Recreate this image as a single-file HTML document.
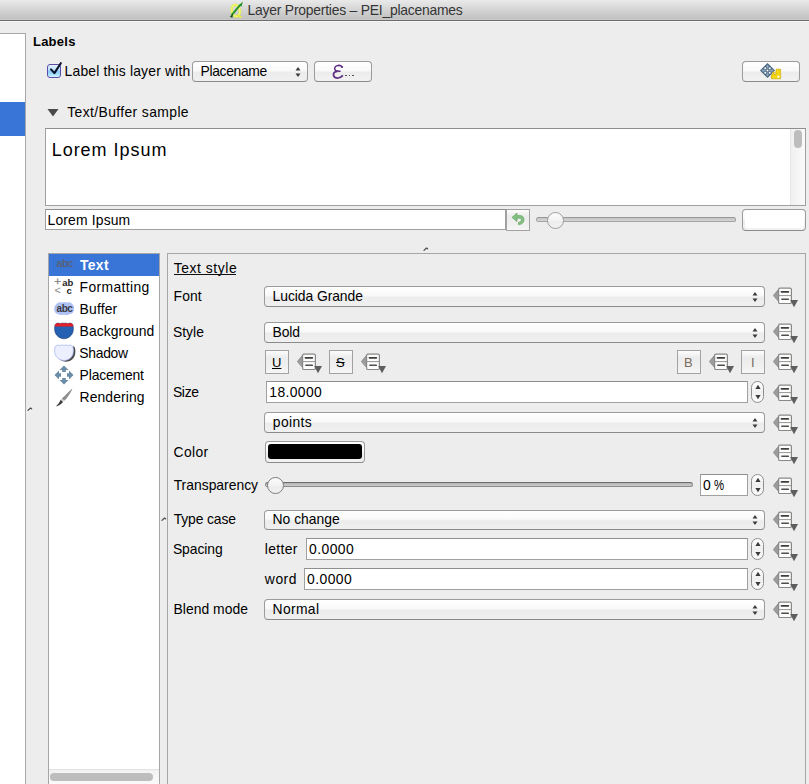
<!DOCTYPE html>
<html><head><meta charset="utf-8"><style>
html,body{margin:0;padding:0;}
body{width:809px;height:784px;overflow:hidden;position:relative;background:#ededed;font-family:"Liberation Sans", sans-serif;}
.abs{position:absolute;}
.dd{position:absolute;}
.t{position:absolute;white-space:pre;line-height:1;font-family:"Liberation Sans", sans-serif;}
.combo{position:absolute;box-sizing:border-box;border:1px solid #9b9b9b;border-bottom-color:#8a8a8a;border-radius:4px;background:linear-gradient(#ffffff,#f9f9f9 45%,#ececec 55%,#f0f0f0);}
.btn{position:absolute;box-sizing:border-box;border:1px solid #9b9b9b;border-bottom-color:#8a8a8a;border-radius:4px;background:linear-gradient(#ffffff,#f9f9f9 45%,#ececec 55%,#f2f2f2);}
.field{position:absolute;box-sizing:border-box;border:1px solid #a0a0a0;border-top-color:#8e8e8e;background:#fff;}
.sqbtn{position:absolute;box-sizing:border-box;border:1px solid #a2a2a2;background:linear-gradient(#fdfdfd,#ececec 30%,#f0f0f0 70%,#f6f6f6);}
.stepper{position:absolute;box-sizing:border-box;border:1px solid #8e8e8e;border-radius:6.5px;background:linear-gradient(#fff,#f0f0f0 50%,#fafafa);}
</style></head><body>
<div class="abs" style="left:0;top:0;width:809px;height:20px;background:linear-gradient(#eaeaea,#d6d6d6 45%,#c2c2c2 92%,#cdcdcd);border-bottom:1px solid #6c6c6c"></div>
<div class="abs" style="left:0;top:21px;width:809px;height:1px;background:#f5f5f5"></div>
<svg class="abs" style="left:229px;top:1px" width="15" height="18" viewBox="0 0 15 18"><ellipse cx="6.8" cy="9.6" rx="4" ry="5.8" transform="rotate(-12 6.8 9.6)" fill="none" stroke="#dfe84a" stroke-width="2.6"/><ellipse cx="6.8" cy="9.6" rx="4" ry="5.8" transform="rotate(-12 6.8 9.6)" fill="none" stroke="#f4f87a" stroke-width="1.2"/><path d="M8.5 13.5 Q10 16.8 12.6 15.8" fill="none" stroke="#e2ea4c" stroke-width="2"/><path d="M2.6 14.2 L11 4.2" stroke="#259325" stroke-width="1.9"/><path d="M9.6 4.4 L13.8 0.6 L12.6 5.6 Z" fill="#1f8f1f"/><path d="M0.8 15.2 L4.2 13.2 L3.2 17 Z" fill="#1b4d1b"/></svg>
<div class="t" style="left:247.62px;top:4.00px;font-size:13.9px;font-weight:400;color:#353535;letter-spacing:-0.226px;">Layer Properties – PEI_placenames</div>
<div class="abs" style="left:-1px;top:33px;width:25px;height:760px;background:#fff;border:1px solid #a8a8a8"></div>
<div class="abs" style="left:0;top:102px;width:25px;height:34px;background:#3875d7"></div>
<div class="t" style="left:32.94px;top:34.90px;font-size:13px;font-weight:700;color:#000;letter-spacing:0.256px;">Labels</div>
<div class="abs" style="left:47px;top:64px;width:12px;height:12px;border:1px solid #5e4aa8;border-radius:3px;background:linear-gradient(#e4f2ff,#bfe0ff 40%,#8ccaff 55%,#b0e4ff 85%,#d4fbff)"></div>
<svg class="abs" style="left:48px;top:60px" width="15" height="16" viewBox="0 0 15 16"><path d="M3 9.4 L6.4 13.1 L12.8 3.2" fill="none" stroke="#0c1428" stroke-width="2.1" stroke-linecap="round" stroke-linejoin="round"/></svg>
<div class="t" style="left:64.62px;top:65.00px;font-size:13.9px;font-weight:400;color:#000;letter-spacing:0.183px;">Label this layer with</div>
<div class="combo" style="left:192px;top:61px;width:116px;height:21px;"></div><svg class="abs" style="left:294px;top:65.5px" width="8" height="12" viewBox="0 0 8 12"><path d="M1.5 4.5 L4 1 L6.5 4.5 Z" fill="#3a3a3a"/><path d="M1.5 7.5 L4 11 L6.5 7.5 Z" fill="#3a3a3a"/></svg><div class="t" style="left:200.62px;top:65.00px;font-size:13.9px;font-weight:400;color:#000;letter-spacing:-0.354px;">Placename</div>
<div class="btn" style="left:314px;top:61px;width:58px;height:21px;"></div>
<svg class="abs" style="left:332px;top:63.5px" width="13" height="15" viewBox="0 0 13 15"><path d="M10.2 3 C9 1.4 6.6 1.1 4.6 1.9 C2.6 2.7 2.1 5 3.5 6.4 C4.4 7.2 6.2 7.4 8.6 7.3" fill="none" stroke="#5d2c82" stroke-width="1.5"/><path d="M5.4 7.4 C2.8 7.7 1.3 9.4 1.5 11.2 C1.7 13.2 3.9 14.2 6 14 C8.1 13.8 9.6 12.8 10.9 11.4" fill="none" stroke="#5d2c82" stroke-width="1.7"/><circle cx="10" cy="3" r="1.1" fill="#5d2c82"/></svg>
<div class="abs" style="left:345px;top:74.5px;width:1.8px;height:1.8px;background:#555"></div><div class="abs" style="left:348.5px;top:74.5px;width:1.8px;height:1.8px;background:#555"></div><div class="abs" style="left:352px;top:74.5px;width:1.8px;height:1.8px;background:#555"></div>
<div class="btn" style="left:742px;top:61px;width:58px;height:21px;"></div>
<svg class="abs" style="left:759px;top:62px" width="23" height="18" viewBox="0 0 23 18"><path d="M8.5 1 L16 8.5 L8.5 16 L1 8.5 Z" fill="#44627b"/><g fill="#8ba6bc"><path d="M8.5 2.4 L10.4 4.5 L9.2 4.5 L9.2 6.6 L7.8 6.6 L7.8 4.5 L6.6 4.5 Z"/><path d="M8.5 14.6 L10.4 12.5 L9.2 12.5 L9.2 10.4 L7.8 10.4 L7.8 12.5 L6.6 12.5 Z"/><path d="M2.4 8.5 L4.5 6.6 L4.5 7.8 L6.6 7.8 L6.6 9.2 L4.5 9.2 L4.5 10.4 Z"/><path d="M14.6 8.5 L12.5 6.6 L12.5 7.8 L10.4 7.8 L10.4 9.2 L12.5 9.2 L12.5 10.4 Z"/></g><g fill="#fff"><rect x="5.4" y="5.4" width="1.8" height="1.8"/><rect x="9.8" y="5.4" width="1.8" height="1.8"/><rect x="5.4" y="9.8" width="1.8" height="1.8"/><rect x="9.8" y="9.8" width="1.8" height="1.8"/><rect x="7.6" y="7.6" width="1.8" height="1.8"/></g><path d="M17 7.2 L21.6 7.2 L21.6 16.8 L12.4 16.8 L12.4 12.6 L13.8 12.6 L13.8 11.6 C13 11 13.4 9.8 14.4 9.8 C15.4 9.8 15.8 11 15.2 11.6 L15.2 12.6 L17 12.6 L17 11.6 C16.2 11 16.6 9.6 17 9.4 Z" fill="#f4d60c" stroke="#c9a600" stroke-width="0.6"/><rect x="18.4" y="13.6" width="2" height="2" fill="#fff"/></svg>
<svg class="abs" style="left:47px;top:108px" width="12" height="9" viewBox="0 0 12 9"><path d="M0.5 1 L11.5 1 L6 8.5 Z" fill="#4a4a4a"/></svg>
<div class="t" style="left:67.21px;top:106.00px;font-size:13.9px;font-weight:400;color:#000;letter-spacing:0.389px;">Text/Buffer sample</div>
<div class="field" style="left:45px;top:128px;width:761px;height:78px;"></div>
<div class="abs" style="left:790px;top:129px;width:14px;height:76px;background:linear-gradient(90deg,#f0f0f0,#fafafa);border-left:1px solid #e6e6e6"></div>
<div class="abs" style="left:794px;top:130px;width:8px;height:18px;border-radius:4px;background:#bdbdbd"></div>
<div class="t" style="left:51.66px;top:140.76px;font-size:18px;font-weight:400;color:#000;letter-spacing:0.974px;">Lorem Ipsum</div>
<div class="field" style="left:45px;top:209px;width:461px;height:21px;"></div>
<div class="t" style="left:47.59px;top:214.00px;font-size:13.9px;font-weight:400;color:#000;letter-spacing:0.155px;">Lorem Ipsum</div>
<div class="sqbtn" style="left:506px;top:209px;width:24px;height:22px;"></div>
<svg class="abs" style="left:510px;top:211px" width="16" height="16" viewBox="0 0 16 16"><path d="M2 6.4 L7 2 L7 4.4 L9.6 4.4 C12.4 4.4 14 6.2 14 8.6 C14 11.4 12 13.2 9.6 13.6 L8.6 13.8 L8.4 11.4 C10.4 11.2 11.4 10.2 11.4 8.8 C11.4 7.6 10.6 7.2 9.4 7.2 L7 7.2 L7 10.6 Z" fill="#82c082" stroke="#5a9c5a" stroke-width="0.6" stroke-linejoin="round"/></svg>
<div class="abs" style="left:536px;top:217px;width:200px;height:5px;box-sizing:border-box;border-radius:2.5px;background:linear-gradient(#c4c4c4,#d6d6d6);border:1px solid #a4a4a4;border-top-color:#989898"></div>
<div class="abs" style="left:547px;top:212px;width:17px;height:17px;box-sizing:border-box;border-radius:50%;border:1px solid #a0a0a0;background:linear-gradient(#fbfbfb,#f3f3f3 50%,#ececec 51%,#f2f2f2)"></div>
<div class="btn" style="left:742px;top:209px;width:64px;height:22px;border-radius:4px"></div>
<div class="abs" style="left:745px;top:212px;width:59px;height:16px;border-radius:3px;background:#fff"></div>
<svg class="abs" style="left:422.5px;top:246.5px" width="7" height="6" viewBox="0 0 7 6"><path d="M1 3.4 L3.2 1.2 Q4 0.9 4.6 1.9" fill="none" stroke="#505050" stroke-width="1.3" stroke-linecap="round"/><path d="M3 4.6 L4.4 3.4" stroke="#fff" stroke-width="1"/></svg>
<svg class="abs" style="left:27px;top:406.5px" width="7" height="6" viewBox="0 0 7 6"><path d="M1 3.4 L3.2 1.2 Q4 0.9 4.6 1.9" fill="none" stroke="#505050" stroke-width="1.3" stroke-linecap="round"/><path d="M3 4.6 L4.4 3.4" stroke="#fff" stroke-width="1"/></svg>
<svg class="abs" style="left:161px;top:516.5px" width="7" height="6" viewBox="0 0 7 6"><path d="M1 3.4 L3.2 1.2 Q4 0.9 4.6 1.9" fill="none" stroke="#505050" stroke-width="1.3" stroke-linecap="round"/><path d="M3 4.6 L4.4 3.4" stroke="#fff" stroke-width="1"/></svg>
<div class="field" style="left:48px;top:253px;width:112px;height:547px;border-color:#a6a6a6"></div>
<div class="abs" style="left:49px;top:254px;width:110px;height:22px;background:#3875d7"></div>
<div class="t" style="left:79.91px;top:259.00px;font-size:13.9px;font-weight:700;color:#fff;letter-spacing:0.363px;">Text</div>
<div class="t" style="left:79.62px;top:281.00px;font-size:13.9px;font-weight:400;color:#000;letter-spacing:0.356px;">Formatting</div>
<div class="t" style="left:79.62px;top:303.00px;font-size:13.9px;font-weight:400;color:#000;letter-spacing:0.152px;">Buffer</div>
<div class="t" style="left:79.62px;top:325.00px;font-size:13.9px;font-weight:400;color:#000;letter-spacing:0.059px;">Background</div>
<div class="t" style="left:79.18px;top:347.00px;font-size:13.9px;font-weight:400;color:#000;letter-spacing:-0.247px;">Shadow</div>
<div class="t" style="left:79.62px;top:369.00px;font-size:13.9px;font-weight:400;color:#000;letter-spacing:-0.161px;">Placement</div>
<div class="t" style="left:79.62px;top:391.00px;font-size:13.9px;font-weight:400;color:#000;letter-spacing:0.089px;">Rendering</div>
<div class="t" style="left:56.50px;top:258.41px;font-size:10.5px;font-weight:400;color:#5e5e66;letter-spacing:-0.200px;-webkit-text-stroke:0.2px #5e5e66;">abc</div>
<div class="t" style="left:54.20px;top:276.27px;font-size:11.5px;font-weight:400;color:#8a8a8a;letter-spacing:0.000px;-webkit-text-stroke:0.3px #8a8a8a;">+</div>
<div class="t" style="left:62.30px;top:277.56px;font-size:9.5px;font-weight:700;color:#262626;letter-spacing:-0.200px;">ab</div>
<div class="t" style="left:54.50px;top:284.69px;font-size:11px;font-weight:400;color:#8a8a8a;letter-spacing:0.000px;"><</div>
<div class="t" style="left:66.50px;top:285.56px;font-size:9.5px;font-weight:700;color:#262626;letter-spacing:0.000px;">c</div>
<svg class="abs" style="left:53px;top:301px" width="22" height="15" viewBox="0 0 22 15"><path d="M4 2.5 Q6 0.6 9 1.6 Q11.5 0.2 14 1.6 Q17 0.8 19 2.8 Q21.6 5 21 8.5 Q20.6 12.5 17 13 Q14 14.6 11 13.4 Q8 14.6 5 13.2 Q1.4 12.4 1.2 8.5 Q1 4.5 4 2.5 Z" fill="#aec0f4"/></svg>
<div class="t" style="left:56.50px;top:303.83px;font-size:10px;font-weight:700;color:#3a3a44;letter-spacing:-0.400px;">abc</div>
<svg class="abs" style="left:54px;top:322px" width="20" height="18" viewBox="0 0 20 18"><path d="M1.3 2.3 Q3.6 0 6.3 1.7 Q8.2 0.4 10 1.4 Q11.8 0.4 13.7 1.7 Q16.4 0 18.7 2.3 C19.6 4.5 19.6 8 18.8 10.5 C17.6 14 14 16.6 10 16.8 C6 16.6 2.4 14 1.2 10.5 C0.4 8 0.4 4.5 1.3 2.3 Z" fill="#2561b3" stroke="#1d3c72" stroke-width="0.6"/><path d="M1.3 2.3 Q3.6 0 6.3 1.7 Q8.2 0.4 10 1.4 Q11.8 0.4 13.7 1.7 Q16.4 0 18.7 2.3 C19 3 19.1 3.8 19.2 4.6 L0.8 4.6 C0.9 3.8 1 3 1.3 2.3 Z" fill="#e2202a"/></svg>
<svg class="abs" style="left:54px;top:344px" width="22" height="20" viewBox="0 0 22 20"><path d="M3 3.3 Q5.3 1 8 2.7 Q10 1.4 11.8 2.4 Q13.8 1.4 15.7 2.7 Q18.4 1 20.7 3.3 C21.6 5.5 21.6 9 20.8 11.5 C19.6 15 16 17.6 12 17.8 C8 17.6 4.4 15 3.2 11.5 C2.4 9 2.4 5.5 3 3.3 Z" fill="#4a4a4a"/><path d="M1.3 2.3 Q3.6 0 6.3 1.7 Q8.2 0.4 10 1.4 Q11.8 0.4 13.7 1.7 Q16.4 0 18.7 2.3 C19.6 4.5 19.6 8 18.8 10.5 C17.6 14 14 16.3 10 16.5 C6 16.3 2.4 14 1.2 10.5 C0.4 8 0.4 4.5 1.3 2.3 Z" fill="#eceffd" stroke="#a9b9f2" stroke-width="0.8"/></svg>
<svg class="abs" style="left:54px;top:365px" width="20" height="20" viewBox="0 0 20 20"><g fill="#6c8ca6"><path d="M10 0.5 L14.5 5 L11.8 5 L11.8 7 L8.2 7 L8.2 5 L5.5 5 Z"/><path d="M10 19.5 L14.5 15 L11.8 15 L11.8 13 L8.2 13 L8.2 15 L5.5 15 Z"/><path d="M0.5 10 L5 5.5 L5 8.2 L7 8.2 L7 11.8 L5 11.8 L5 14.5 Z"/><path d="M19.5 10 L15 5.5 L15 8.2 L13 8.2 L13 11.8 L15 11.8 L15 14.5 Z"/></g></svg>
<svg class="abs" style="left:55px;top:388px" width="18" height="19" viewBox="0 0 18 19"><path d="M17.4 0.6 C16.6 3.4 14.2 7 11.6 10.4 L9.2 12.8 L6.8 10.6 L9 8.4 C11.8 5.6 14.6 2.8 17.4 0.6 Z" fill="#8e8e8e"/><path d="M17.4 0.6 C14.8 3.2 12 6 9.2 8.8 L8.2 9.8 C11.2 6.6 14.2 3.6 17.4 0.6 Z" fill="#d0d0d0"/><path d="M9.2 12.8 L6.8 10.6 L5.6 11.8 L8 14 Z" fill="#cfcfcf"/><path d="M0.8 18.4 C4 17.8 6.4 16 8 14 L5.6 11.8 C4.8 14 3.2 16.4 0.8 18.4 Z" fill="#3c3c3c"/></svg>
<div class="abs" style="left:49px;top:769px;width:110px;height:16px;background:linear-gradient(#f2f2f2,#fafafa);border-top:1px solid #e2e2e2"></div>
<div class="abs" style="left:50px;top:773px;width:103px;height:8px;border-radius:4px;background:#bdbdbd"></div>
<div class="abs" style="left:167px;top:253px;width:637px;height:560px;border:1px solid #a6a6a6;background:#ededed"></div>
<div class="t" style="left:173.63px;top:262.00px;font-size:13.9px;font-weight:400;color:#000;letter-spacing:0.576px;">Text style</div>
<div class="abs" style="left:174px;top:274px;width:62px;height:1px;background:#111"></div>
<div class="t" style="left:173.52px;top:290.00px;font-size:13.9px;font-weight:400;color:#000;letter-spacing:0.125px;">Font</div>
<div class="t" style="left:172.88px;top:326.00px;font-size:13.9px;font-weight:400;color:#000;letter-spacing:0.047px;">Style</div>
<div class="t" style="left:172.88px;top:386.00px;font-size:13.9px;font-weight:400;color:#000;letter-spacing:-0.280px;">Size</div>
<div class="t" style="left:173.59px;top:446.00px;font-size:13.9px;font-weight:400;color:#000;letter-spacing:0.359px;">Color</div>
<div class="t" style="left:173.63px;top:479.00px;font-size:13.9px;font-weight:400;color:#000;letter-spacing:0.003px;">Transparency</div>
<div class="t" style="left:173.63px;top:513.00px;font-size:13.9px;font-weight:400;color:#000;letter-spacing:-0.127px;">Type case</div>
<div class="t" style="left:172.88px;top:543.00px;font-size:13.9px;font-weight:400;color:#000;letter-spacing:-0.057px;">Spacing</div>
<div class="t" style="left:173.52px;top:603.00px;font-size:13.9px;font-weight:400;color:#000;letter-spacing:0.024px;">Blend mode</div>
<div class="combo" style="left:264px;top:286px;width:501px;height:21px;"></div><svg class="abs" style="left:751px;top:290.5px" width="8" height="12" viewBox="0 0 8 12"><path d="M1.5 4.5 L4 1 L6.5 4.5 Z" fill="#3a3a3a"/><path d="M1.5 7.5 L4 11 L6.5 7.5 Z" fill="#3a3a3a"/></svg><div class="t" style="left:272.62px;top:290.00px;font-size:13.9px;font-weight:400;color:#000;letter-spacing:-0.070px;">Lucida Grande</div>
<svg class="dd" style="left:773px;top:287px" width="26" height="21" viewBox="0 0 26 21"><path d="M0.3 8.5 L5.5 2.3 L5.5 14.5 Z" fill="#9c9c9c" stroke="#777" stroke-width="0.6" stroke-linejoin="round"/><rect x="5.6" y="1.1" width="12.8" height="15.4" rx="1.3" fill="#fdfdfd" stroke="#888886" stroke-width="1.2"/><line x1="5.6" y1="8.6" x2="18.4" y2="8.6" stroke="#959593" stroke-width="1"/><rect x="7.6" y="4" width="8.6" height="1.7" rx="0.8" fill="#3e3e3c"/><rect x="8.1" y="11.6" width="8" height="1.3" rx="0.6" fill="#4e4e4c"/><path d="M17.2 12.9 L25 12.9 L21 20.2 Z" fill="#5e5e5e"/></svg>
<div class="combo" style="left:264px;top:322px;width:501px;height:21px;"></div><svg class="abs" style="left:751px;top:326.5px" width="8" height="12" viewBox="0 0 8 12"><path d="M1.5 4.5 L4 1 L6.5 4.5 Z" fill="#3a3a3a"/><path d="M1.5 7.5 L4 11 L6.5 7.5 Z" fill="#3a3a3a"/></svg><div class="t" style="left:272.62px;top:326.00px;font-size:13.9px;font-weight:400;color:#000;letter-spacing:-0.177px;">Bold</div>
<svg class="dd" style="left:773px;top:323px" width="26" height="21" viewBox="0 0 26 21"><path d="M0.3 8.5 L5.5 2.3 L5.5 14.5 Z" fill="#9c9c9c" stroke="#777" stroke-width="0.6" stroke-linejoin="round"/><rect x="5.6" y="1.1" width="12.8" height="15.4" rx="1.3" fill="#fdfdfd" stroke="#888886" stroke-width="1.2"/><line x1="5.6" y1="8.6" x2="18.4" y2="8.6" stroke="#959593" stroke-width="1"/><rect x="7.6" y="4" width="8.6" height="1.7" rx="0.8" fill="#3e3e3c"/><rect x="8.1" y="11.6" width="8" height="1.3" rx="0.6" fill="#4e4e4c"/><path d="M17.2 12.9 L25 12.9 L21 20.2 Z" fill="#5e5e5e"/></svg>
<div class="sqbtn" style="left:265px;top:350px;width:24px;height:24px;"></div>
<div class="sqbtn" style="left:329px;top:350px;width:24px;height:24px;"></div>
<div class="sqbtn" style="left:677px;top:350px;width:24px;height:24px;"></div>
<div class="sqbtn" style="left:741px;top:350px;width:24px;height:24px;"></div>
<div class="t" style="left:272px;top:356px;font-size:13px;text-decoration:underline">U</div>
<div class="t" style="left:336px;top:356px;font-size:13px;text-decoration:line-through">S</div>
<div class="t" style="left:684px;top:356px;font-size:13px;color:#7a6a5a">B</div>
<div class="t" style="left:751px;top:356px;font-size:13px;color:#7a6a5a">I</div>
<svg class="dd" style="left:297px;top:353px" width="26" height="21" viewBox="0 0 26 21"><path d="M0.3 8.5 L5.5 2.3 L5.5 14.5 Z" fill="#9c9c9c" stroke="#777" stroke-width="0.6" stroke-linejoin="round"/><rect x="5.6" y="1.1" width="12.8" height="15.4" rx="1.3" fill="#fdfdfd" stroke="#888886" stroke-width="1.2"/><line x1="5.6" y1="8.6" x2="18.4" y2="8.6" stroke="#959593" stroke-width="1"/><rect x="7.6" y="4" width="8.6" height="1.7" rx="0.8" fill="#3e3e3c"/><rect x="8.1" y="11.6" width="8" height="1.3" rx="0.6" fill="#4e4e4c"/><path d="M17.2 12.9 L25 12.9 L21 20.2 Z" fill="#5e5e5e"/></svg>
<svg class="dd" style="left:361px;top:353px" width="26" height="21" viewBox="0 0 26 21"><path d="M0.3 8.5 L5.5 2.3 L5.5 14.5 Z" fill="#9c9c9c" stroke="#777" stroke-width="0.6" stroke-linejoin="round"/><rect x="5.6" y="1.1" width="12.8" height="15.4" rx="1.3" fill="#fdfdfd" stroke="#888886" stroke-width="1.2"/><line x1="5.6" y1="8.6" x2="18.4" y2="8.6" stroke="#959593" stroke-width="1"/><rect x="7.6" y="4" width="8.6" height="1.7" rx="0.8" fill="#3e3e3c"/><rect x="8.1" y="11.6" width="8" height="1.3" rx="0.6" fill="#4e4e4c"/><path d="M17.2 12.9 L25 12.9 L21 20.2 Z" fill="#5e5e5e"/></svg>
<svg class="dd" style="left:709px;top:353px" width="26" height="21" viewBox="0 0 26 21"><path d="M0.3 8.5 L5.5 2.3 L5.5 14.5 Z" fill="#9c9c9c" stroke="#777" stroke-width="0.6" stroke-linejoin="round"/><rect x="5.6" y="1.1" width="12.8" height="15.4" rx="1.3" fill="#fdfdfd" stroke="#888886" stroke-width="1.2"/><line x1="5.6" y1="8.6" x2="18.4" y2="8.6" stroke="#959593" stroke-width="1"/><rect x="7.6" y="4" width="8.6" height="1.7" rx="0.8" fill="#3e3e3c"/><rect x="8.1" y="11.6" width="8" height="1.3" rx="0.6" fill="#4e4e4c"/><path d="M17.2 12.9 L25 12.9 L21 20.2 Z" fill="#5e5e5e"/></svg>
<svg class="dd" style="left:773px;top:353px" width="26" height="21" viewBox="0 0 26 21"><path d="M0.3 8.5 L5.5 2.3 L5.5 14.5 Z" fill="#9c9c9c" stroke="#777" stroke-width="0.6" stroke-linejoin="round"/><rect x="5.6" y="1.1" width="12.8" height="15.4" rx="1.3" fill="#fdfdfd" stroke="#888886" stroke-width="1.2"/><line x1="5.6" y1="8.6" x2="18.4" y2="8.6" stroke="#959593" stroke-width="1"/><rect x="7.6" y="4" width="8.6" height="1.7" rx="0.8" fill="#3e3e3c"/><rect x="8.1" y="11.6" width="8" height="1.3" rx="0.6" fill="#4e4e4c"/><path d="M17.2 12.9 L25 12.9 L21 20.2 Z" fill="#5e5e5e"/></svg>
<div class="field" style="left:266px;top:381px;width:482px;height:22px;"></div>
<div class="t" style="left:269.35px;top:386.00px;font-size:13.9px;font-weight:400;color:#000;letter-spacing:0.372px;">18.0000</div>
<div class="stepper" style="left:751px;top:381px;width:13px;height:22px;"></div><svg class="abs" style="left:753.5px;top:384px" width="8" height="16" viewBox="0 0 8 16"><path d="M1.4 5 L4 0.8 L6.6 5 Z" fill="#3a3a3a"/><path d="M1.4 11 L4 15.2 L6.6 11 Z" fill="#3a3a3a"/></svg>
<svg class="dd" style="left:773px;top:384px" width="26" height="21" viewBox="0 0 26 21"><path d="M0.3 8.5 L5.5 2.3 L5.5 14.5 Z" fill="#9c9c9c" stroke="#777" stroke-width="0.6" stroke-linejoin="round"/><rect x="5.6" y="1.1" width="12.8" height="15.4" rx="1.3" fill="#fdfdfd" stroke="#888886" stroke-width="1.2"/><line x1="5.6" y1="8.6" x2="18.4" y2="8.6" stroke="#959593" stroke-width="1"/><rect x="7.6" y="4" width="8.6" height="1.7" rx="0.8" fill="#3e3e3c"/><rect x="8.1" y="11.6" width="8" height="1.3" rx="0.6" fill="#4e4e4c"/><path d="M17.2 12.9 L25 12.9 L21 20.2 Z" fill="#5e5e5e"/></svg>
<div class="combo" style="left:264px;top:412px;width:501px;height:21px;"></div><svg class="abs" style="left:751px;top:416.5px" width="8" height="12" viewBox="0 0 8 12"><path d="M1.5 4.5 L4 1 L6.5 4.5 Z" fill="#3a3a3a"/><path d="M1.5 7.5 L4 11 L6.5 7.5 Z" fill="#3a3a3a"/></svg><div class="t" style="left:272.78px;top:416.00px;font-size:13.9px;font-weight:400;color:#000;letter-spacing:0.388px;">points</div>
<svg class="dd" style="left:773px;top:414px" width="26" height="21" viewBox="0 0 26 21"><path d="M0.3 8.5 L5.5 2.3 L5.5 14.5 Z" fill="#9c9c9c" stroke="#777" stroke-width="0.6" stroke-linejoin="round"/><rect x="5.6" y="1.1" width="12.8" height="15.4" rx="1.3" fill="#fdfdfd" stroke="#888886" stroke-width="1.2"/><line x1="5.6" y1="8.6" x2="18.4" y2="8.6" stroke="#959593" stroke-width="1"/><rect x="7.6" y="4" width="8.6" height="1.7" rx="0.8" fill="#3e3e3c"/><rect x="8.1" y="11.6" width="8" height="1.3" rx="0.6" fill="#4e4e4c"/><path d="M17.2 12.9 L25 12.9 L21 20.2 Z" fill="#5e5e5e"/></svg>
<div class="btn" style="left:265px;top:441px;width:100px;height:22px;border-radius:4px"></div>
<div class="abs" style="left:268px;top:444px;width:94px;height:15px;border-radius:3px;background:#000"></div>
<svg class="dd" style="left:773px;top:444px" width="26" height="21" viewBox="0 0 26 21"><path d="M0.3 8.5 L5.5 2.3 L5.5 14.5 Z" fill="#9c9c9c" stroke="#777" stroke-width="0.6" stroke-linejoin="round"/><rect x="5.6" y="1.1" width="12.8" height="15.4" rx="1.3" fill="#fdfdfd" stroke="#888886" stroke-width="1.2"/><line x1="5.6" y1="8.6" x2="18.4" y2="8.6" stroke="#959593" stroke-width="1"/><rect x="7.6" y="4" width="8.6" height="1.7" rx="0.8" fill="#3e3e3c"/><rect x="8.1" y="11.6" width="8" height="1.3" rx="0.6" fill="#4e4e4c"/><path d="M17.2 12.9 L25 12.9 L21 20.2 Z" fill="#5e5e5e"/></svg>
<div class="abs" style="left:265px;top:482px;width:428px;height:5px;box-sizing:border-box;border-radius:2.5px;background:linear-gradient(#b4b4b4,#cdcdcd);border:1px solid #8c8c8c;border-top-color:#6e6e6e"></div>
<div class="abs" style="left:267px;top:477px;width:17px;height:17px;box-sizing:border-box;border-radius:50%;border:1px solid #7e7e7e;background:linear-gradient(#fbfbfb,#f3f3f3 50%,#ececec 51%,#f2f2f2)"></div>
<div class="field" style="left:700px;top:474px;width:48px;height:22px;"></div>
<div class="t" style="left:702.94px;top:479.00px;font-size:13.9px;font-weight:400;color:#000;letter-spacing:0.000px;">0</div>
<div class="t" style="left:714.33px;top:479.00px;font-size:13.9px;font-weight:400;color:#000;letter-spacing:0.000px;transform:scaleX(0.82);transform-origin:0 0;">%</div>
<div class="stepper" style="left:751px;top:474px;width:13px;height:22px;"></div><svg class="abs" style="left:753.5px;top:477px" width="8" height="16" viewBox="0 0 8 16"><path d="M1.4 5 L4 0.8 L6.6 5 Z" fill="#3a3a3a"/><path d="M1.4 11 L4 15.2 L6.6 11 Z" fill="#3a3a3a"/></svg>
<svg class="dd" style="left:773px;top:477px" width="26" height="21" viewBox="0 0 26 21"><path d="M0.3 8.5 L5.5 2.3 L5.5 14.5 Z" fill="#9c9c9c" stroke="#777" stroke-width="0.6" stroke-linejoin="round"/><rect x="5.6" y="1.1" width="12.8" height="15.4" rx="1.3" fill="#fdfdfd" stroke="#888886" stroke-width="1.2"/><line x1="5.6" y1="8.6" x2="18.4" y2="8.6" stroke="#959593" stroke-width="1"/><rect x="7.6" y="4" width="8.6" height="1.7" rx="0.8" fill="#3e3e3c"/><rect x="8.1" y="11.6" width="8" height="1.3" rx="0.6" fill="#4e4e4c"/><path d="M17.2 12.9 L25 12.9 L21 20.2 Z" fill="#5e5e5e"/></svg>
<div class="combo" style="left:264px;top:510px;width:501px;height:20px;"></div><svg class="abs" style="left:751px;top:514.0px" width="8" height="12" viewBox="0 0 8 12"><path d="M1.5 4.5 L4 1 L6.5 4.5 Z" fill="#3a3a3a"/><path d="M1.5 7.5 L4 11 L6.5 7.5 Z" fill="#3a3a3a"/></svg><div class="t" style="left:272.62px;top:513.00px;font-size:13.9px;font-weight:400;color:#000;letter-spacing:-0.024px;">No change</div>
<svg class="dd" style="left:773px;top:511px" width="26" height="21" viewBox="0 0 26 21"><path d="M0.3 8.5 L5.5 2.3 L5.5 14.5 Z" fill="#9c9c9c" stroke="#777" stroke-width="0.6" stroke-linejoin="round"/><rect x="5.6" y="1.1" width="12.8" height="15.4" rx="1.3" fill="#fdfdfd" stroke="#888886" stroke-width="1.2"/><line x1="5.6" y1="8.6" x2="18.4" y2="8.6" stroke="#959593" stroke-width="1"/><rect x="7.6" y="4" width="8.6" height="1.7" rx="0.8" fill="#3e3e3c"/><rect x="8.1" y="11.6" width="8" height="1.3" rx="0.6" fill="#4e4e4c"/><path d="M17.2 12.9 L25 12.9 L21 20.2 Z" fill="#5e5e5e"/></svg>
<div class="t" style="left:264.79px;top:543.00px;font-size:13.9px;font-weight:400;color:#000;letter-spacing:0.347px;">letter</div>
<div class="field" style="left:306px;top:538px;width:442px;height:22px;"></div>
<div class="t" style="left:309.10px;top:543.00px;font-size:13.9px;font-weight:400;color:#000;letter-spacing:0.414px;">0.0000</div>
<div class="stepper" style="left:751px;top:538px;width:13px;height:22px;"></div><svg class="abs" style="left:753.5px;top:541px" width="8" height="16" viewBox="0 0 8 16"><path d="M1.4 5 L4 0.8 L6.6 5 Z" fill="#3a3a3a"/><path d="M1.4 11 L4 15.2 L6.6 11 Z" fill="#3a3a3a"/></svg>
<svg class="dd" style="left:773px;top:541px" width="26" height="21" viewBox="0 0 26 21"><path d="M0.3 8.5 L5.5 2.3 L5.5 14.5 Z" fill="#9c9c9c" stroke="#777" stroke-width="0.6" stroke-linejoin="round"/><rect x="5.6" y="1.1" width="12.8" height="15.4" rx="1.3" fill="#fdfdfd" stroke="#888886" stroke-width="1.2"/><line x1="5.6" y1="8.6" x2="18.4" y2="8.6" stroke="#959593" stroke-width="1"/><rect x="7.6" y="4" width="8.6" height="1.7" rx="0.8" fill="#3e3e3c"/><rect x="8.1" y="11.6" width="8" height="1.3" rx="0.6" fill="#4e4e4c"/><path d="M17.2 12.9 L25 12.9 L21 20.2 Z" fill="#5e5e5e"/></svg>
<div class="t" style="left:264.85px;top:573.00px;font-size:13.9px;font-weight:400;color:#000;letter-spacing:0.507px;">word</div>
<div class="field" style="left:304px;top:568px;width:444px;height:22px;"></div>
<div class="t" style="left:307.04px;top:573.00px;font-size:13.9px;font-weight:400;color:#000;letter-spacing:0.433px;">0.0000</div>
<div class="stepper" style="left:751px;top:568px;width:13px;height:22px;"></div><svg class="abs" style="left:753.5px;top:571px" width="8" height="16" viewBox="0 0 8 16"><path d="M1.4 5 L4 0.8 L6.6 5 Z" fill="#3a3a3a"/><path d="M1.4 11 L4 15.2 L6.6 11 Z" fill="#3a3a3a"/></svg>
<svg class="dd" style="left:773px;top:571px" width="26" height="21" viewBox="0 0 26 21"><path d="M0.3 8.5 L5.5 2.3 L5.5 14.5 Z" fill="#9c9c9c" stroke="#777" stroke-width="0.6" stroke-linejoin="round"/><rect x="5.6" y="1.1" width="12.8" height="15.4" rx="1.3" fill="#fdfdfd" stroke="#888886" stroke-width="1.2"/><line x1="5.6" y1="8.6" x2="18.4" y2="8.6" stroke="#959593" stroke-width="1"/><rect x="7.6" y="4" width="8.6" height="1.7" rx="0.8" fill="#3e3e3c"/><rect x="8.1" y="11.6" width="8" height="1.3" rx="0.6" fill="#4e4e4c"/><path d="M17.2 12.9 L25 12.9 L21 20.2 Z" fill="#5e5e5e"/></svg>
<div class="combo" style="left:264px;top:599px;width:501px;height:21px;"></div><svg class="abs" style="left:751px;top:603.5px" width="8" height="12" viewBox="0 0 8 12"><path d="M1.5 4.5 L4 1 L6.5 4.5 Z" fill="#3a3a3a"/><path d="M1.5 7.5 L4 11 L6.5 7.5 Z" fill="#3a3a3a"/></svg><div class="t" style="left:272.62px;top:603.00px;font-size:13.9px;font-weight:400;color:#000;letter-spacing:0.322px;">Normal</div>
<svg class="dd" style="left:773px;top:601px" width="26" height="21" viewBox="0 0 26 21"><path d="M0.3 8.5 L5.5 2.3 L5.5 14.5 Z" fill="#9c9c9c" stroke="#777" stroke-width="0.6" stroke-linejoin="round"/><rect x="5.6" y="1.1" width="12.8" height="15.4" rx="1.3" fill="#fdfdfd" stroke="#888886" stroke-width="1.2"/><line x1="5.6" y1="8.6" x2="18.4" y2="8.6" stroke="#959593" stroke-width="1"/><rect x="7.6" y="4" width="8.6" height="1.7" rx="0.8" fill="#3e3e3c"/><rect x="8.1" y="11.6" width="8" height="1.3" rx="0.6" fill="#4e4e4c"/><path d="M17.2 12.9 L25 12.9 L21 20.2 Z" fill="#5e5e5e"/></svg>
</body></html>
